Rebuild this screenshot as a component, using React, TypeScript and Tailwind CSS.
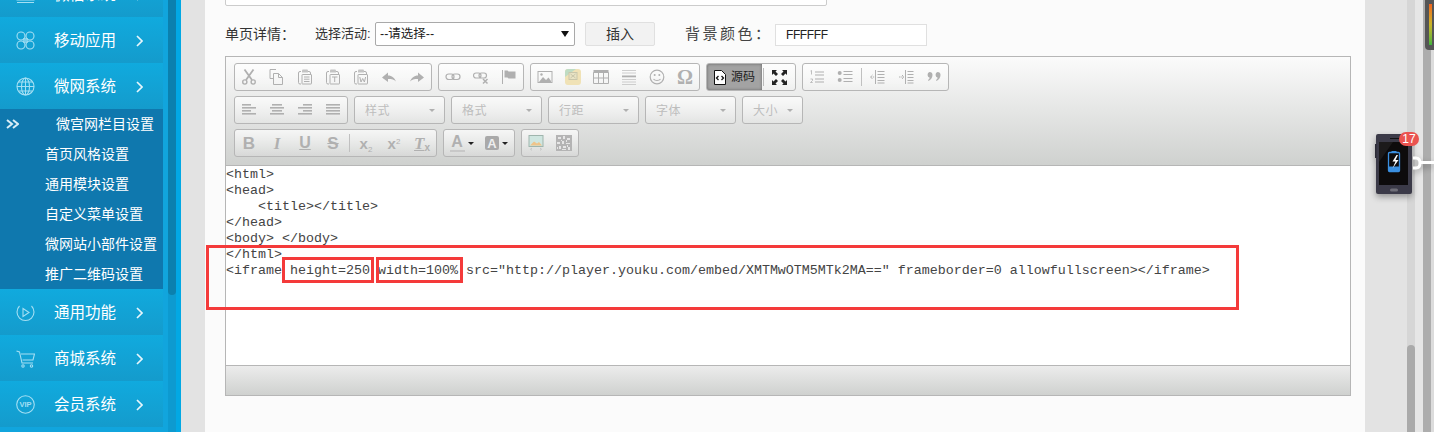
import React from 'react';

const cjk = "font-['Liberation_Sans','Noto_Sans_CJK_SC',sans-serif]";

const Svg: React.FC<{ children: React.ReactNode; stroke?: string; size?: number }> = ({ children, stroke = '#b0b0b0', size = 16 }) => (
  <svg width={size} height={size} viewBox="0 0 16 16" fill="none" stroke={stroke} strokeWidth="1">
    {children}
  </svg>
);

const g = '#b0b0b0';

const Clip: React.FC<{ children?: React.ReactNode }> = ({ children }) => (
  <Svg>
    <path d="M4 2.5H3a1.5 1.5 0 0 0-1.5 1.5v9.500a1.500 1.500 0 0 0 1.500 1.500h1" />
    <path d="M5 1.500a1 1 0 0 1 1-1h4a1 1 0 0 1 1 1V3.500H5z" fill="#c4c4c4" stroke="none" />
    <path d="M11 2.500h1a1.500 1.500 0 0 1 1.500 1.500v1" />
    <rect x="5" y="5.500" width="9.500" height="9.500" rx="0.500" />
    {children}
  </Svg>
);

const bars = (rows: [number, number][]) => (
  <Svg>
    {rows.map(([x, w], i) => (
      <rect key={i} x={x} y={2 + i * 3} width={w} height="1.6" fill={g} stroke="none" />
    ))}
  </Svg>
);

const tools: Record<string, React.ReactNode> = {
  cut: (
    <Svg>
      <path d="M3.500 0.500l7.500 10.500M12.500 0.500L5 11" strokeWidth="1.800" />
      <circle cx="3.800" cy="13" r="2.100" strokeWidth="1.400" />
      <circle cx="12.200" cy="13" r="2.100" strokeWidth="1.400" />
    </Svg>
  ),
  copy: (
    <Svg>
      <path d="M7 .500H1v9h3" />
      <path d="M4.500 4.500h5l4 4v7h-9z" />
      <path d="M9.500 4.500v4h4" />
    </Svg>
  ),
  paste: (
    <Clip>
      <path d="M7 8h5.500M7 10.200h5.500M7 12.500h5.500" />
    </Clip>
  ),
  pasteText: (
    <Clip>
      <path d="M7 8h5.500M9.700 8v5" />
    </Clip>
  ),
  pasteWord: (
    <Clip>
      <path d="M6.800 8l1.200 5 1.700-3.500 1.700 3.500 1.200-5" />
    </Clip>
  ),
  undo: (
    <Svg>
      <path d="M1 8.500L7 3.500v3c4 0 6.500 2.500 8 6-2-2-4-2.500-8-2.500v3z" fill={g} stroke="none" />
    </Svg>
  ),
  redo: (
    <Svg>
      <path d="M15 8.500L9 3.500v3c-4 0-6.500 2.500-8 6 2-2 4-2.500 8-2.500v3z" fill={g} stroke="none" />
    </Svg>
  ),
  link: (
    <Svg>
      <rect x="1" y="5" width="8" height="5.500" rx="2.700" strokeWidth="1.200" />
      <rect x="7" y="5" width="8" height="5.500" rx="2.700" strokeWidth="1.200" />
    </Svg>
  ),
  unlink: (
    <Svg>
      <rect x="0.500" y="4" width="7.500" height="5" rx="2.500" strokeWidth="1.200" />
      <rect x="6" y="4" width="7.500" height="5" rx="2.500" strokeWidth="1.200" />
      <path d="M10 10l4.500 4.500M14.500 10L10 14.500" strokeWidth="1.500" />
    </Svg>
  ),
  flag: (
    <Svg>
      <path d="M1.500 1v14" />
      <path d="M3.500 1.500h3l1 1h7v7h-7l-1-1h-3z" fill={g} stroke="none" />
    </Svg>
  ),
  image: (
    <Svg>
      <rect x="1" y="2.500" width="14" height="11" />
      <circle cx="4.500" cy="5.500" r="1.200" fill={g} stroke="none" />
      <path d="M2 13l4-5 3 3 2.500-2.500L14 12v1z" fill={g} stroke="none" />
    </Svg>
  ),
  photo: (
    <Svg>
      <rect x="0" y="0" width="16" height="16" rx="3" fill="#f0e2b6" stroke="none" />
      <path d="M0 3a3 3 0 0 1 3-3h8L0 8z" fill="#bfdcc4" stroke="none" />
      <rect x="4" y="3.500" width="8" height="7" fill="#e8e3c4" stroke="#c9c6aa" />
      <path d="M5.500 5l5 4M10.500 5l-5 4" stroke="#c9c6aa" />
    </Svg>
  ),
  table: (
    <Svg>
      <rect x="0.500" y="1" width="15" height="3" fill={g} stroke="none" />
      <path d="M0.500 3.500h15v11h-15zM0.500 9h15M5.500 3.500v11M10.500 3.500v11" />
    </Svg>
  ),
  hr: (
    <Svg>
      <path d="M1 1.500h14M1 4h14M1 10.500h14M1 13h14M1 15.500h14" strokeWidth="0.900" stroke="#c8c8c8" />
      <rect x="1" y="6.500" width="14" height="1.800" fill={g} stroke="none" />
    </Svg>
  ),
  smile: (
    <Svg>
      <circle cx="8" cy="8" r="6.800" strokeWidth="1.200" />
      <circle cx="5.700" cy="6" r="1" fill={g} stroke="none" />
      <circle cx="10.300" cy="6" r="1" fill={g} stroke="none" />
      <path d="M4.500 10c1.500 2 5.500 2 7 0" strokeWidth="1.200" />
    </Svg>
  ),
  omega: <span className="font-['Liberation_Serif',serif] text-[20px] font-bold leading-none text-[#b0b0b0]">Ω</span>,
  left: bars([[1, 9], [1, 14], [1, 9], [1, 14]]),
  center: bars([[3, 10], [1, 14], [3, 10], [1, 14]]),
  right: bars([[6, 9], [1, 14], [6, 9], [1, 14]]),
  justify: bars([[1, 14], [1, 14], [1, 14], [1, 14]]),
  bold: <span className="font-['Liberation_Sans',sans-serif] text-[17px] font-bold leading-none text-[#b0b0b0]">B</span>,
  italic: <span className="font-['Liberation_Serif',serif] text-[17px] font-bold italic leading-none text-[#b0b0b0]">I</span>,
  underline: <span className="font-['Liberation_Sans',sans-serif] text-[16px] font-bold leading-none text-[#b0b0b0] underline">U</span>,
  strike: <span className="font-['Liberation_Sans',sans-serif] text-[17px] font-bold leading-none text-[#b0b0b0] line-through">S</span>,
  sub: (
    <span className="font-['Liberation_Sans',sans-serif] text-[15px] font-bold leading-none text-[#b0b0b0]">
      x<span className="relative top-[3px] text-[8px] font-normal">2</span>
    </span>
  ),
  sup: (
    <span className="font-['Liberation_Sans',sans-serif] text-[15px] font-bold leading-none text-[#b0b0b0]">
      x<span className="relative -top-[5px] text-[8px] font-normal">2</span>
    </span>
  ),
  clear: (
    <span className="font-['Liberation_Serif',serif] text-[17px] font-bold italic leading-none text-[#b0b0b0] underline">
      T<span className="relative top-[2px] font-['Liberation_Sans',sans-serif] text-[10px] not-italic">x</span>
    </span>
  ),
  ol: (
    <Svg>
      <path d="M1.500 2l1-.500v4M1.500 10h2v1.500l-2 2h2.200" strokeWidth="0.800" />
      <path d="M6 3h9M6 6h9M6 10h9M6 13h9" strokeWidth="1.200" />
    </Svg>
  ),
  ul: (
    <Svg>
      <circle cx="2.700" cy="4" r="2" fill={g} stroke="none" />
      <circle cx="2.700" cy="11" r="2" fill={g} stroke="none" />
      <path d="M6.500 2.500h9M6.500 5.500h9M6.500 9.500h9M6.500 12.500h9" strokeWidth="1.100" />
    </Svg>
  ),
  outdent: (
    <Svg>
      <path d="M5.500 1v14" />
      <path d="M7.500 2.500h7M7.500 5.500h7M7.500 8.500h7M7.500 11.500h7M7.500 14h7" />
      <path d="M0.500 8h4M2.500 6l-2 2 2 2" strokeDasharray="1.500 0.700" />
    </Svg>
  ),
  indent: (
    <Svg>
      <path d="M7.500 1v14" />
      <path d="M9.500 2.500h6M9.500 5.500h6M9.500 8.500h6M9.500 11.500h6M9.500 14h6" />
      <path d="M1 8h5M4 6l2 2-2 2" strokeDasharray="1.500 0.700" />
    </Svg>
  ),
  quote: (
    <Svg>
      <path d="M3.500 3a3 3 0 0 1 3 3c0 3-2 5-4 6l-.500-1c1-.600 1.500-1.500 1.700-2.300A3 3 0 0 1 3.500 3z" fill={g} stroke="none" />
      <path d="M11.500 3a3 3 0 0 1 3 3c0 3-2 5-4 6l-.500-1c1-.600 1.500-1.500 1.700-2.300a3 3 0 0 1-.2-5.700z" fill={g} stroke="none" />
    </Svg>
  ),
  color: (
    <span className="flex flex-col items-center">
      <span className="font-['Liberation_Sans',sans-serif] text-[16px] font-bold leading-[14px] text-[#b0b0b0]">A</span>
      <span className="mt-[1px] h-[2px] w-[15px] bg-[#c8c8c8]" />
    </span>
  ),
  bgColor: (
    <span className="flex h-[14px] w-[14px] items-center justify-center rounded-[2px] bg-[#a9a9a9] font-['Liberation_Sans',sans-serif] text-[13px] font-bold leading-none text-[#eeeeee]">
      A
    </span>
  ),
  mapPic: (
    <Svg>
      <rect x="1" y="0.500" width="14" height="11" fill="#cfe6e0" stroke="#9fb5ad" />
      <path d="M2 10.500l4-4 3 2 2-1.500 3 3.500z" fill="#efc48a" stroke="none" />
      <path d="M4 13l-1.500 1.200L4 15.400M12 13l1.500 1.200L12 15.400" stroke="#b8b8b8" strokeWidth="0.700" />
    </Svg>
  ),
  qr: (
    <Svg>
      <rect x="0" y="0" width="16" height="16" fill="#b4b4b4" stroke="none" />
      <path d="M2 2h3v2H2zM7 1h2v3H7zM11 3h3v2h-3zM1 7h3v2H1zM6 6h2v3H6zM10 8h4v1h-4zM3 11h2v3H3zM7 11h3v2H7zM12 12h2v3h-2zM5 5h1v1H5zM10 5h1v2h-1zM1 12h1v2H1zM6 14h4v1H6zM11 10h1v2h-1z" fill="#e6e6e6" stroke="none" />
    </Svg>
  ),
};

const Caret: React.FC<{ color?: string }> = ({ color = 'border-t-[#b0b0b0]' }) => (
  <span className={`h-0 w-0 border-x-[3px] border-t-[3px] border-x-transparent ${color}`} />
);

const groupCls =
  'flex h-[28px] items-center rounded-[3px] border border-[#b6b6b6] bg-linear-to-b from-[#ffffffb8] to-[#ffffff18]';

const Btn: React.FC<{ name: string }> = ({ name }) => (
  <span className="flex h-full w-[28px] items-center justify-center">{tools[name]}</span>
);

const Sep = () => <span className="mx-[2px] h-[18px] w-[1px] bg-[#c0c0c0]" />;

const Group: React.FC<{ items: string[] }> = ({ items }) => (
  <div className={groupCls}>
    {items.map((item, i) => (item === '|' ? <Sep key={i} /> : <Btn key={i} name={item} />))}
  </div>
);

const Combo: React.FC<{ label: string; width: string }> = ({ label, width }) => (
  <div className={`${groupCls} ${width} justify-between pl-[10px] pr-[9px] pt-[1px] text-[12px] tracking-[0.500px] text-[#bdbdbd]`}>
    <span>{label}</span>
    <Caret />
  </div>
);

const Menu: React.FC<{ icon: React.ReactNode; label: string }> = ({ icon, label }) => (
  <div className="flex h-[46px] items-center bg-linear-to-b from-[#10aade] to-[#149bcc] pl-[16px] pr-[20px] pt-[1px] text-[15.500px] text-white">
    <span className="flex w-[38px] shrink-0">{icon}</span>
    <span className="flex-1">{label}</span>
    <svg width="7" height="12" viewBox="0 0 7 12" fill="none" stroke="#e6f6fc" strokeWidth="1.700">
      <path d="M1 1l5 5-5 5" />
    </svg>
  </div>
);

const ic = '#a5dff3';
const MenuSvg: React.FC<{ children: React.ReactNode }> = ({ children }) => (
  <svg width="19" height="19" viewBox="0 0 19 19" fill="none" stroke={ic} strokeWidth="1.100">
    {children}
  </svg>
);

const SubItems = ['首页风格设置', '通用模块设置', '自定义菜单设置', '微网站小部件设置', '推广二维码设置'];

const Sidebar = () => (
  <aside className={`flex h-full w-[181px] shrink-0 bg-[#11a5dd] ${cjk}`}>
    <div className="w-[163px] shrink-0">
      <div className="-mt-[29px]">
        <Menu
          icon={
            <MenuSvg>
              <path d="M1 3h17v12H1zM1 17.500h17" />
            </MenuSvg>
          }
          label="微信系统"
        />
      </div>
      <Menu
        icon={
          <MenuSvg>
            <circle cx="5" cy="5" r="4" />
            <circle cx="14" cy="5" r="4" />
            <circle cx="5" cy="14" r="4" />
            <circle cx="14" cy="14" r="4" />
            <rect x="7" y="7" width="5" height="5" fill={ic} stroke="none" opacity="0.700" />
          </MenuSvg>
        }
        label="移动应用"
      />
      <Menu
        icon={
          <MenuSvg>
            <circle cx="9.500" cy="9.500" r="8.500" />
            <ellipse cx="9.500" cy="9.500" rx="4" ry="8.500" />
            <path d="M9.500 1v17M1 9.500h17M2.500 5h14M2.500 14h14" />
          </MenuSvg>
        }
        label="微网系统"
      />
      <div className="bg-[#0f78ae] text-[14px] leading-[30px] text-white">
        <div className="flex h-[30px] items-center pl-[6px]">
          <svg width="13" height="10" viewBox="0 0 13 10" fill="none" stroke="#d9eef7" strokeWidth="2">
            <path d="M1 1l5 4-5 4M7 1l5 4-5 4" />
          </svg>
          <span className="ml-[37px]">微宫网栏目设置</span>
        </div>
        {SubItems.map((item) => (
          <div key={item} className="pl-[45px]">
            {item}
          </div>
        ))}
      </div>
      <Menu
        icon={
          <MenuSvg>
            <path d="M3.500 3a8.500 8.500 0 1 0 12 0" />
            <path d="M7 5.500l6 4-6 4z" />
          </MenuSvg>
        }
        label="通用功能"
      />
      <Menu
        icon={
          <MenuSvg>
            <path d="M0.500 2l3 1 2.500 11h11M5 5h13.500l-1.500 6H6.500" />
            <circle cx="7" cy="17" r="1.200" />
            <circle cx="15.500" cy="17" r="1.200" />
          </MenuSvg>
        }
        label="商城系统"
      />
      <Menu
        icon={
          <svg width="19" height="19" viewBox="0 0 19 19" fill="none" stroke={ic}>
            <circle cx="9.500" cy="9.500" r="8.800" strokeWidth="1.100" />
            <text x="9.500" y="12" textAnchor="middle" fontSize="7.500" fontWeight="700" fontFamily="Liberation Sans" fill={ic} stroke="none">
              VIP
            </text>
          </svg>
        }
        label="会员系统"
      />
    </div>
    <div className="w-[5px] shrink-0 bg-[#11a5dd]" />
    <div className="h-full w-[8px] shrink-0 bg-[#0d9ad0]">
      <div className="h-[295px] rounded-b-[4px] bg-[#0b80ae]" />
    </div>
    <div className="w-[5px] shrink-0 bg-[#02a8e4]" />
  </aside>
);

const code = `<html>
<head>
    <title></title>
</head>
<body> </body>
</html>
<iframe height=250 width=100% src="http://player.youku.com/embed/XMTMwOTM5MTk2MA==" frameborder=0 allowfullscreen></iframe>`;

const Editor = () => (
  <div className="mt-[10px] w-[1126px] border border-[#b6b6b6] bg-white">
    <div className="flex h-[108px] flex-col gap-[5px] bg-linear-to-b from-[#fbfbfb] to-[#cfd1cf] pl-[8px] pt-[6px]">
      <div className="flex gap-[6px]">
        <Group items={['cut', 'copy', 'paste', 'pasteText', 'pasteWord', 'undo', 'redo']} />
        <Group items={['link', 'unlink', 'flag']} />
        <Group items={['image', 'photo', 'table', 'hr', 'smile', 'omega']} />
        <div className={groupCls}>
          <div className="flex h-full w-[55px] items-center justify-center gap-[5px] rounded-l-[2px] bg-[#a3a3a3] text-[12px] text-[#222] shadow-[inset_0_0_3px_#666]">
            <svg width="12" height="15" viewBox="0 0 12 15">
              <path d="M0.500 0.500h7l4 4v10H0.500z" fill="#fff" stroke="#111" />
              <path d="M4.500 6L2.500 8l2 2M7.500 6l2 2-2 2" fill="none" stroke="#111" strokeWidth="1.300" />
            </svg>
            <span>源码</span>
          </div>
          <span className="ml-[1px] h-[18px] w-[1px] bg-[#bbb]" />
          <span className="flex h-full w-[31px] items-center justify-center">
            <svg width="15" height="15" viewBox="0 0 15 15" fill="#222">
              <path d="M0 0h5L3.500 1.500 6 4 4 6 1.500 3.500 0 5zM15 0v5l-1.500-1.500L11 6 9 4l2.500-2.500L10 0zM0 15v-5l1.500 1.500L4 9l2 2-2.500 2.500L5 15zM15 15h-5l1.500-1.500L9 11l2-2 2.500 2.500L15 10z" />
            </svg>
          </span>
        </div>
        <Group items={['ol', 'ul', '|', 'outdent', 'indent', 'quote']} />
      </div>
      <div className="flex gap-[6px]">
        <Group items={['left', 'center', 'right', 'justify']} />
        <Combo label="样式" width="w-[91px]" />
        <Combo label="格式" width="w-[91px]" />
        <Combo label="行距" width="w-[91px]" />
        <Combo label="字体" width="w-[91px]" />
        <Combo label="大小" width="w-[61px]" />
      </div>
      <div className="flex gap-[6px]">
        <Group items={['bold', 'italic', 'underline', 'strike', '|', 'sub', 'sup', 'clear']} />
        <div className={groupCls}>
          {(['color', 'bgColor'] as const).map((name) => (
            <span key={name} className="flex h-full w-[35px] items-center justify-center gap-[3px]">
              {tools[name]}
              <Caret color="border-t-[#222]" />
            </span>
          ))}
        </div>
        <Group items={['mapPic', 'qr']} />
      </div>
    </div>
    <pre className="h-[201px] border-y border-[#b6b6b6] bg-white pt-[1px] font-['Liberation_Mono',monospace] text-[13.33px] leading-[16px] text-[#444]">
      {code}
    </pre>
    <div className="h-[29px] bg-linear-to-b from-[#ececec] to-[#cfd1cf]" />
  </div>
);

const Main = () => (
  <main className={`h-full w-[1160px] shrink-0 bg-[#fbfbfb] pl-[20px] ${cjk}`}>
    <div className="-mt-[20px] h-[26px] w-[602px] rounded-[2px] border border-[#cccccc] bg-white" />
    <div className="mt-[16px] flex h-[24px] items-center text-[#333]">
      <span className="w-[90px] shrink-0 text-[14px]">单页详情：</span>
      <span className="w-[60px] shrink-0 text-[13px]">选择活动:</span>
      <div className="flex h-[24px] w-[200px] items-center justify-between rounded-[2px] border border-[#a9a9a9] bg-white pl-[4px] pr-[5px] text-[12.500px] text-[#222]">
        <span>--请选择--</span>
        <span className="h-0 w-0 border-x-[4px] border-t-[6px] border-x-transparent border-t-[#111]" />
      </div>
      <div className="ml-[10px] flex h-[24px] w-[70px] items-center justify-center rounded-[2px] border border-[#e0e0e0] bg-[#f2f2f2] text-[14px]">
        插入
      </div>
      <span className="ml-[31px] w-[89px] shrink-0 -translate-x-[1px] text-[15px] tracking-[2.500px] text-[#444]">背景颜色：</span>
      <div className="flex h-[22px] w-[152px] items-center self-end border border-[#e0e0e0] bg-white pl-[10px] font-['Liberation_Sans',sans-serif] text-[12px] tracking-[-0.400px] text-[#222]">
        FFFFFF
      </div>
    </div>
    <Editor />
  </main>
);

const RightRail = () => (
  <div className="flex h-full flex-1">
    <div className="w-[42px] shrink-0 bg-[#e3e3e3]" />
    <div className="flex w-[8px] shrink-0 flex-col bg-[#d6d6d6]">
      <div className="h-[345px]" />
      <div className="flex-1 rounded-t-[4px] bg-[#aaaaaa]" />
    </div>
    <div className="w-[8px] shrink-0 bg-[#e6e6e6]" />
    <div className="w-[8px] shrink-0 bg-[#adadad]" />
    <div className="flex-1 bg-[#dcdcdc]" />
  </div>
);

const RedBox: React.FC<{ className: string }> = ({ className }) => (
  <div className={`absolute border-[3px] border-[#f43a3a] ${className}`} />
);

const Phone = () => (
  <>
    <div className="absolute left-[1425px] top-0 h-[50px] w-[9px] rounded-bl-[4px] bg-[#555555] pl-[4px] pt-[4px]">
      <div className="h-[41px] w-[3px] bg-linear-to-b from-[#f0641e] via-[#c8b428] to-[#3cb43c]" />
    </div>
    <svg className="absolute left-[1372px] top-[128px] drop-shadow-[0_3px_3px_rgba(0,0,0,0.350)]" width="62" height="70" viewBox="0 0 62 70">
      <path d="M41 30h3c3 0 4 2 4 5s-1 5-4 5h-3" fill="none" stroke="#fff" strokeWidth="3" />
      <path d="M48 34.500h14" stroke="#fff" strokeWidth="3" />
      <rect x="4" y="6" width="36" height="60" rx="2" fill="#3b3a48" />
      <rect x="3" y="16" width="1.500" height="14" fill="#2c2b36" />
      <rect x="7" y="14" width="29" height="43" fill="#0d0b0c" />
      <path d="M7 14h14L7 34z" fill="#1c1a1b" />
      <rect x="18" y="10" width="10" height="1" fill="#111" />
      <rect x="18" y="60.500" width="8" height="3" rx="1.500" fill="#6f6e78" />
      <rect x="19.500" y="23" width="5" height="1.500" fill="#3a8fe0" />
      <rect x="16.500" y="24.500" width="11" height="19" rx="1" fill="none" stroke="#3a8fe0" strokeWidth="1.300" />
      <rect x="17" y="38.500" width="10" height="5" fill="#3a8fe0" />
      <path d="M24.500 27l-4 6.500h3l-3 7 6-8.500h-3l2.500-5z" fill="#fff" />
    </svg>
    <div className="absolute left-[1399px] top-[132px] flex h-[14px] w-[20px] items-center justify-center rounded-full bg-[#ea5350] font-['Liberation_Sans',sans-serif] text-[12px] text-white">
      17
    </div>
  </>
);

export default function App() {
  return (
    <div className="relative flex h-[432px] w-[1434px] overflow-hidden bg-[#e3e3e3]">
      <Sidebar />
      <div className="w-[24px] shrink-0 bg-[#e3e3e3]" />
      <Main />
      <RightRail />
      <RedBox className="left-[206px] top-[245px] h-[65px] w-[1033px]" />
      <RedBox className="left-[282px] top-[257px] h-[26px] w-[92px]" />
      <RedBox className="left-[376px] top-[257px] h-[26px] w-[87px]" />
      <Phone />
    </div>
  );
}
